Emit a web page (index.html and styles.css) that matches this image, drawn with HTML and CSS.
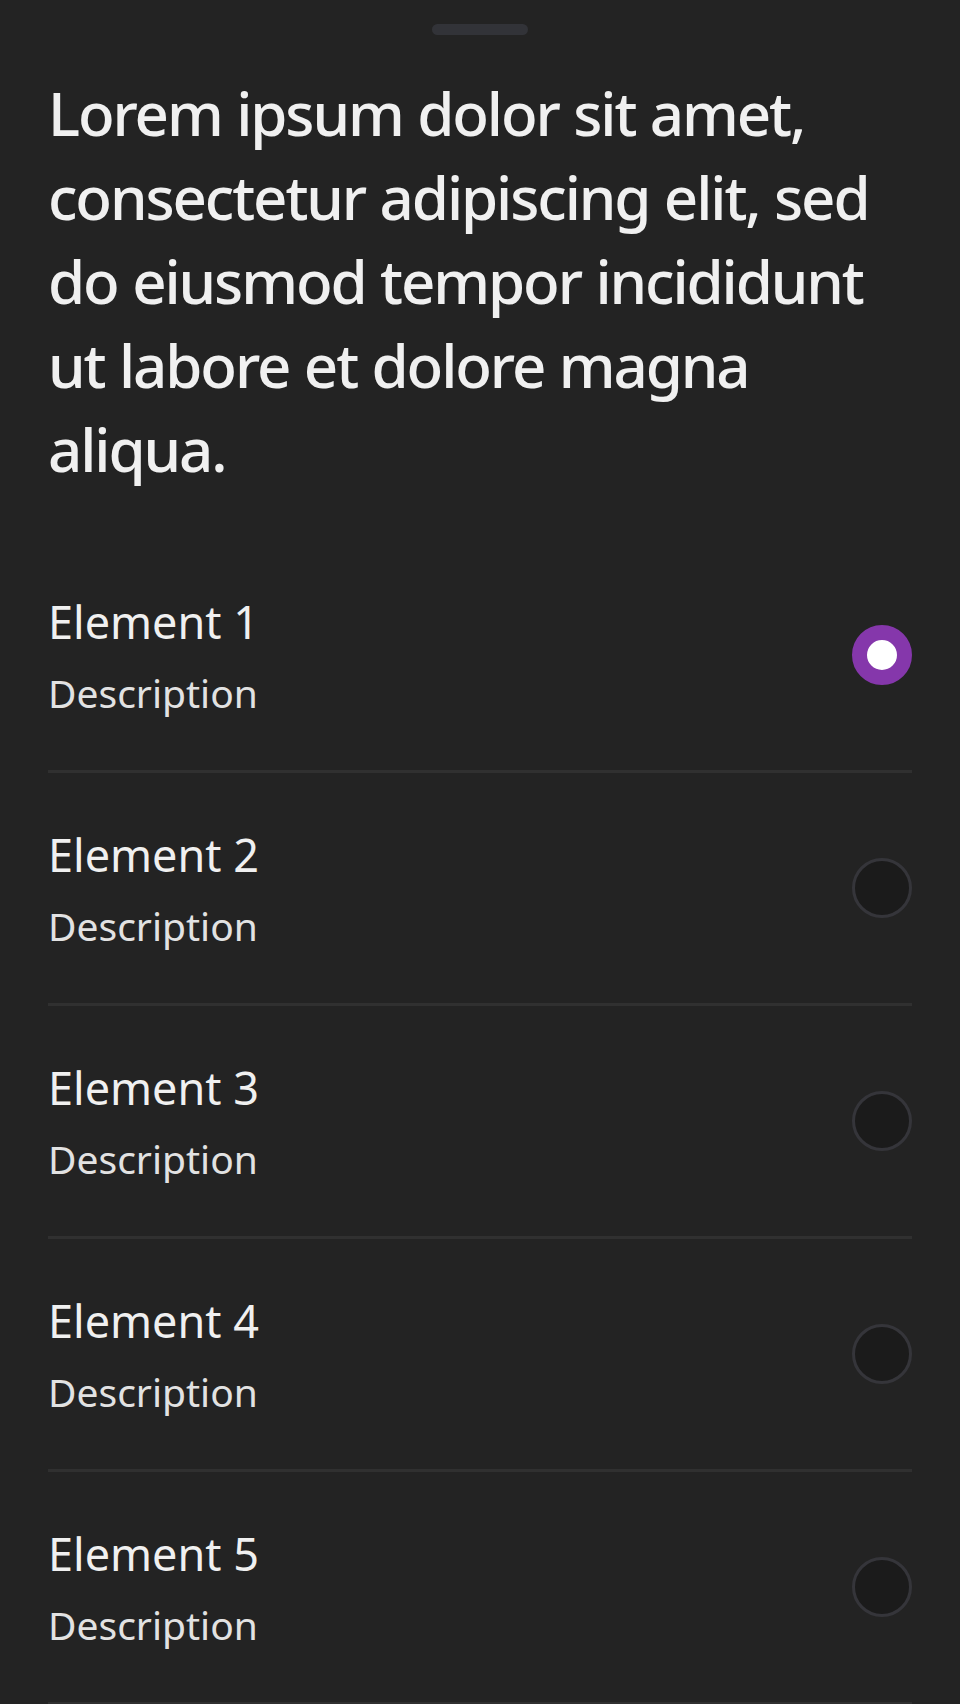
FILE: index.html
```html
<!DOCTYPE html>
<html lang="en">
<head>
<meta charset="utf-8">
<title>Sheet</title>
<link rel="stylesheet" href="styles.css">
</head>
<body>
<div class="sheet">
  <div class="handle"></div>
  <h1 class="title">Lorem ipsum dolor sit amet, consectetur adipiscing elit, sed do eiusmod tempor incididunt ut labore et dolore magna aliqua.</h1>
  <ul class="list">
    <li class="row">
      <div class="text"><div class="name">Element 1</div><div class="desc">Description</div></div>
      <span class="radio selected"></span>
    </li>
    <li class="row">
      <div class="text"><div class="name">Element 2</div><div class="desc">Description</div></div>
      <span class="radio"></span>
    </li>
    <li class="row">
      <div class="text"><div class="name">Element 3</div><div class="desc">Description</div></div>
      <span class="radio"></span>
    </li>
    <li class="row">
      <div class="text"><div class="name">Element 4</div><div class="desc">Description</div></div>
      <span class="radio"></span>
    </li>
    <li class="row">
      <div class="text"><div class="name">Element 5</div><div class="desc">Description</div></div>
      <span class="radio"></span>
    </li>
  </ul>
</div>
</body>
</html>
```
FILE: styles.css
```css
html, body {
  margin: 0;
  padding: 0;
  background: #232323;
}
body {
  width: 960px;
  height: 1704px;
  overflow: hidden;
  font-family: "Noto Sans", "Open Sans", sans-serif;
  color: #f0f0f0;
}
.sheet {
  display: flex;
  flex-direction: column;
  padding: 0 48px;
}
.handle {
  align-self: center;
  width: 96px;
  height: 11px;
  border-radius: 6px;
  background: #323338;
  margin-top: 24px;
}
.title {
  margin: 36px 0 0;
  font-size: 60px;
  line-height: 84px;
  font-weight: 500;
  color: #f0f0f0;
  letter-spacing: -2.1px;
  word-spacing: 1px;
}
.list {
  list-style: none;
  margin: 49px 0 0;
  padding: 0;
}
.row {
  height: 230px;
  display: flex;
  align-items: center;
  justify-content: space-between;
  border-bottom: 3px solid #303030;
}
.text {
  display: flex;
  flex-direction: column;
}
.name {
  font-size: 45px;
  line-height: 60px;
  color: #f0f0f0;
}
.desc {
  margin-top: 15px;
  font-size: 39px;
  line-height: 52px;
  color: #e2e2e2;
}
.radio {
  width: 54px;
  height: 54px;
  border-radius: 50%;
  border: 3px solid #35353a;
  background: #1b1b1b;
  box-sizing: content-box;
}
.radio.selected {
  width: 30px;
  height: 30px;
  border: 15px solid #8537ab;
  background: #ffffff;
}
```
